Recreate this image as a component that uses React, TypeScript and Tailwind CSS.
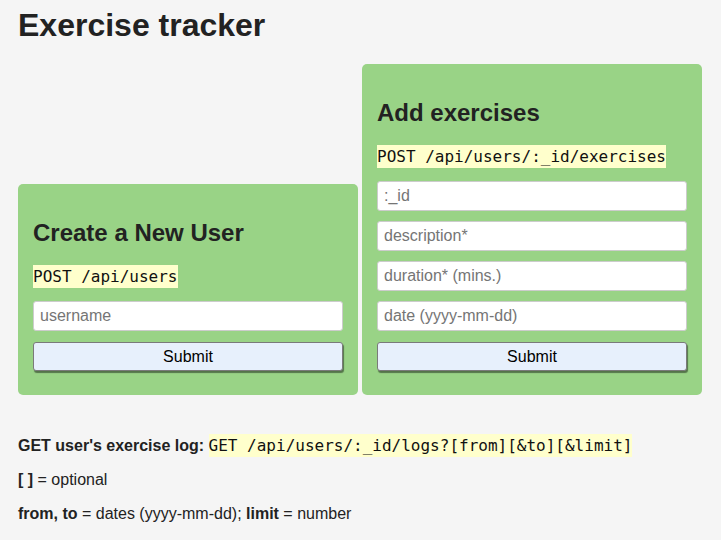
import React from "react";

const sans = { fontFamily: '"Liberation Sans", Arial, Helvetica, sans-serif' };

function Field({ placeholder }: { placeholder: string }) {
  return (
    <input
      type="text"
      placeholder={placeholder}
      className="block h-[30px] w-full rounded-[3px] border border-[#cccccc] bg-white px-[6px] text-[16px] text-[#222] placeholder:text-[#757575] outline-none"
    />
  );
}

function SubmitButton() {
  return (
    <button
      type="button"
      className="mt-[1px] block h-[29px] w-full rounded-[3px] border border-[#7a7a7a] bg-[#e7f0fc] text-[16px] text-black shadow-[1px_2px_1px_rgba(0,0,0,0.45)]"
    >
      Submit
    </button>
  );
}

function Endpoint({ children }: { children: React.ReactNode }) {
  return (
    <code className="bg-[#ffffcc] py-[2px] font-['DejaVu_Sans_Mono',monospace] text-[16px] text-[#111]">
      {children}
    </code>
  );
}

function Card({
  title,
  endpoint,
  fields,
}: {
  title: string;
  endpoint: string;
  fields: string[];
}) {
  return (
    <div className="w-[340px] rounded-[5px] bg-[#99d386] px-[15px] pt-[15px] pb-[24px]">
      <h2 className="mt-[20px] mb-[20px] text-[24px] font-bold leading-[normal] text-[#222]">
        {title}
      </h2>
      <p className="mb-[15px] leading-[normal]">
        <Endpoint>{endpoint}</Endpoint>
      </p>
      <form className="flex flex-col gap-[10px]">
        {fields.map((f) => (
          <Field key={f} placeholder={f} />
        ))}
        <SubmitButton />
      </form>
    </div>
  );
}

export default function App() {
  return (
    <div className="min-h-[540px] bg-[#f5f5f5] px-[18px] pt-[7px] text-[16px] leading-[normal] text-[#222]" style={sans}>
      <h1 className="text-[32px] font-bold leading-[normal] text-[#222]">Exercise tracker</h1>

      {/* Forms */}
      <div className="mt-[20px] flex items-end gap-[4px]">
        <Card title="Create a New User" endpoint="POST /api/users" fields={["username"]} />
        <Card
          title="Add exercises"
          endpoint="POST /api/users/:_id/exercises"
          fields={[":_id", "description*", "duration* (mins.)", "date (yyyy-mm-dd)"]}
        />
      </div>

      {/* Log docs */}
      <div className="mt-[41px] flex flex-col gap-[16px] leading-[normal]">
        <p>
          <b>GET user's exercise log:</b> <Endpoint>GET /api/users/:_id/logs?[from][&amp;to][&amp;limit]</Endpoint>
        </p>
        <p>
          <b>[ ]</b> = optional
        </p>
        <p>
          <b>from, to</b> = dates (yyyy-mm-dd); <b>limit</b> = number
        </p>
      </div>
    </div>
  );
}
